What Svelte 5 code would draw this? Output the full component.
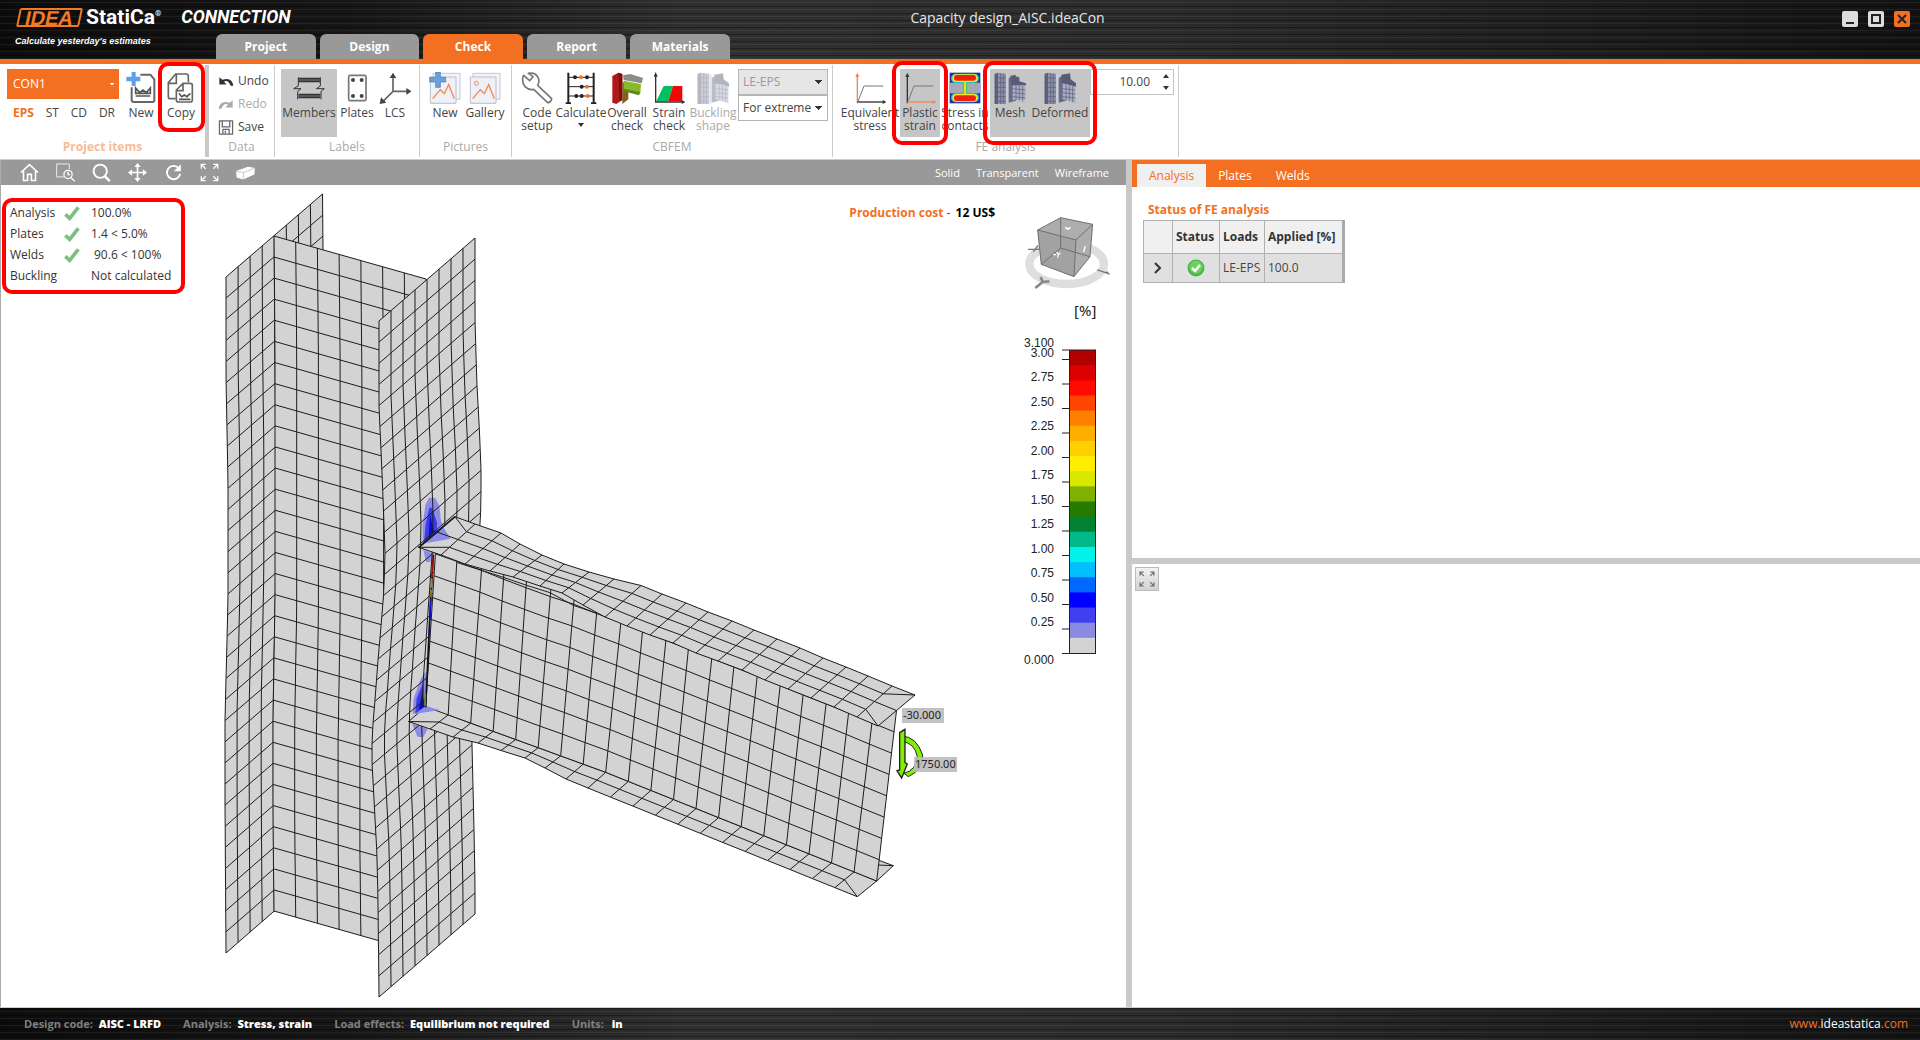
<script>
  const tabs = ['Project', 'Design', 'Check', 'Report', 'Materials'];
  const colors = ['#b00000', '#dc0000', '#ff0a00', '#ff4500', '#ff8000', '#ffae00', '#ffd000', '#ffee00', '#d8e800', '#80b000', '#267a00', '#008232', '#00ba8c', '#00f2e8', '#00bfff', '#0068ff', '#0000ff', '#4040f0', '#8a8ae0', '#d3d3d3'];
  const ticks = Array.from({ length: 12 }, (_, i) => ({ t: (3 - i * 0.25).toFixed(2), y: 359.5 + i * 24.5 }));
  const checks = [
    { name: 'Analysis', ok: true, value: '100.0%' },
    { name: 'Plates', ok: true, value: '1.4 < 5.0%' },
    { name: 'Welds', ok: true, value: '90.6 < 100%', indent: true },
    { name: 'Buckling', ok: false, value: 'Not calculated' }
  ];

  // Point at height y on a polyline of [x, y] nodes.
  const xAt = (line, y) => {
    let i = 1;
    while (i < line.length - 1 && line[i][1] < y) i++;
    const [a, b] = [line[i - 1], line[i]];
    return a[0] + ((b[0] - a[0]) * (y - a[1])) / (b[1] - a[1]);
  };
  const edge = (line, n) => {
    const y0 = line[0][1], y1 = line[line.length - 1][1];
    return Array.from({ length: n + 1 }, (_, i) => {
      const y = y0 + ((y1 - y0) * i) / n;
      return [xAt(line, y), y];
    });
  };
  const mix = (a, b, t) => [a[0] + (b[0] - a[0]) * t, a[1] + (b[1] - a[1]) * t];
  const path = (pts) => 'M' + pts.map((p) => p[0].toFixed(1) + ' ' + p[1].toFixed(1)).join('L');
  // Ruled mesh between two edges that have the same number of stations.
  const mesh = (A, B, cells, from = 0, to = A.length - 1) => {
    let d = '';
    for (let j = from; j <= to; j++) d += path([A[j], B[j]]);
    for (let k = 0; k <= cells; k++) {
      d += path(A.slice(from, to + 1).map((p, i) => mix(p, B[from + i], k / cells)));
    }
    return d;
  };
  const outline = (A, B) => path([...A, ...[...B].reverse()]) + 'Z';

  const rearL = edge([[226, 277], [226, 380], [228, 480], [228, 600], [225, 720], [225, 800], [226, 953]], 32);
  const webL = edge([[274, 236], [275, 350], [275, 600], [273, 720], [273, 820], [274, 911]], 32);
  const rearR = webL.map(([x, y]) => [x + 48.5, y - 42]);
  const webR = webL.map(([x, y]) => [x + 152, y + 43]);
  const frontL = edge([[379, 321], [379, 406], [382, 473], [384, 525], [385, 553], [384, 590], [381, 627], [378, 660], [375, 700], [372, 735], [372, 762], [374, 800], [377, 855], [378, 900], [379, 997]], 32);
  const frontR = edge([[475, 238], [475, 320], [477, 387], [479, 420], [481, 470], [481, 505], [478, 560], [471, 680], [472, 745], [474, 830], [475, 880], [475, 914]], 32);

  const topBack = [[455, 516.7], [475, 524], [501, 533], [520, 544], [542, 555], [564, 564], [589, 572], [614, 579], [641, 585.5], [662, 594], [686, 603], [708, 612], [732, 621], [754, 630], [777, 639], [800, 648], [823, 658], [846, 667], [868, 676], [892, 686], [915, 695]];
  const topFront = [[418.5, 547.3], [441, 555], [465, 564], [490, 571], [513, 577], [540, 586], [562, 593], [583, 605], [605, 617], [627, 626], [650, 635], [673, 643], [696, 653], [718, 661], [742, 670], [765, 680], [788, 689], [811, 698], [834, 707], [857, 717], [878, 726]];
  const webTop = topBack.map((p, i) => mix(p, topFront[i], 0.5));
  const webBottom = topBack.map((_, i) => (i <= 8 ? mix([425.7, 706.7], [605.7, 772.3], i / 8) : mix([605.7, 772.3], [876.7, 881], (i - 8) / 12)));
  const lowFront = topBack.map((_, i) => (i < 8 ? [[408.5, 721.5], [430, 729], [453, 737], [478, 743], [501, 750.5], [525, 758], [545, 768], [566, 779]][i] : mix([588, 788], [857.3, 896.7], (i - 8) / 12)));
  const q = (i, t) => mix(topBack[i], topFront[i], t);
  const low = (i) => mix(webBottom[i], lowFront[i], 0.5);

  const plates = [
    { fill: outline(rearL, rearR), lines: mesh(rearL, rearR, 8) },
    { fill: outline(webL, webR), lines: mesh(webL, webR, 7) }
  ];
  const front = { fill: outline(frontL, frontR), lines: mesh(frontL, frontR, 8) };
  const beam = [
    { fill: 'M878 860L893.3 865.7L876.7 881Z', lines: 'M878 860L893.3 865.7L876.7 881M878 865L893.3 865.7' },
    { fill: outline(webBottom, lowFront), lines: mesh(webBottom, lowFront, 2, 1, 19) + path([low(1), lowFront[0], lowFront[1]]) + path([low(19), lowFront[20], lowFront[19]]) + path([webBottom[0], lowFront[0]]) + path([webBottom[19], webBottom[20], lowFront[20]]) },
    { fill: outline(webTop, webBottom), lines: mesh(webTop, webBottom, 8) }
  ];
  const topPlate = {
    fill: outline(topBack, topFront),
    lines: mesh(topBack, topFront, 4, 1, 19) +
      [[0, 1], [20, 19]].map(([e, s]) => path([q(s, 0), q(e, 0), q(e, 1), q(s, 1)]) + path([q(s, 0.25), q(e, 0)]) + path([q(s, 0.5), q(e, 0.5)]) + path([q(s, 0.75), q(e, 1)])).join('')
  };
</script>

{#snippet plate(p)}
  <path class="skin" d={p.fill} />
  <path class="wire" d={p.lines} />
{/snippet}

{#snippet picture()}
  <path d="M12 4H93V82H12Z" fill="#f2f4f8" stroke="#c3c8d6" stroke-width="3" />
  <path d="M4 15H81V94H4Z" fill="#eff1f6" stroke="#b9bfce" stroke-width="3" />
  <path d="M11 80L34 53L46 65L59 38L76 80" fill="none" stroke="#ef8a58" stroke-width="4" />
{/snippet}

{#snippet steel(bend)}
  <path d="M2 6L12 2L36 5V96H2Z" fill="#8c90a8" />
  <path d="M2 6L12 2V96H2Z" fill="#5d617c" />
  <path d="M36 5L44 8V92L36 96Z" fill="#c9cbd8" />
  <path d="M44 18L60 8L66 10V86L44 92Z" fill="#686c86" />
  <path d={bend ? 'M56 34L94 44V94L56 82Z' : 'M56 36H94V84H56Z'} fill="#a9adc4" />
  <path d={bend ? 'M52 8L78 4L80 22L96 34V44L52 32Z' : 'M50 10L76 16V28L96 34V40H52Z'} fill="#575b76" />
  <path d="M20 4V96M28 5V96M2 18H36M2 32H36M2 46H36M2 60H36M2 74H36M2 88H36M66 38V84M76 40V86M86 42V90M56 50L94 54M56 62L94 66M56 74L94 78" fill="none" stroke="#565a76" stroke-width="2" />
{/snippet}

{#snippet axes(yc, xc)}
  <path d="M10 94V12" stroke={yc} stroke-width="4" /><path d="M10 2L4 15H16Z" fill={yc} />
  <path d="M10 90H90" stroke={xc} stroke-width="4" /><path d="M98 90L86 84V96Z" fill={xc} />
  <path d="M12 88L30 42H88" fill="none" stroke="#777" stroke-width="3" />
{/snippet}

{#snippet corners(c)}
  <path d="M4 18V4H18M4 4L18 18M56 18V4H42M56 4L42 18M4 42V56H18M4 56L18 42M56 42V56H42M56 56L42 42" fill="none" stroke={c} stroke-width="4" />
{/snippet}

<div class="app">
  <header class="metal">
    <div class="top">
      <div class="brand">
        <span class="idea">IDEA</span><span class="statica">StatiCa<sup>®</sup></span><span class="product">CONNECTION</span>
      </div>
      <span class="doc">Capacity design_AISC.ideaCon</span>
      <div class="window">
        <button aria-label="Minimize"><svg viewBox="0 0 16 16"><rect width="16" height="16" rx="2" fill="#ddd" /><path d="M4 12H12" stroke="#222" stroke-width="2" /></svg></button>
        <button aria-label="Maximize"><svg viewBox="0 0 16 16"><rect width="16" height="16" rx="2" fill="#ddd" /><path d="M4 4H12V12H4Z" fill="none" stroke="#222" stroke-width="2" /></svg></button>
        <button aria-label="Close"><svg viewBox="0 0 16 16"><rect width="16" height="16" rx="2" fill="#f36f21" /><path d="M4 4L12 12M12 4L4 12" stroke="#222" stroke-width="2" /></svg></button>
      </div>
    </div>
    <div class="bottom">
      <span class="tag">Calculate yesterday's estimates</span>
      <nav>
        {#each tabs as t}<button class:active={t === 'Check'}>{t}</button>{/each}
      </nav>
    </div>
  </header>

  <section class="ribbon">
    <div class="group g-items">
      <div class="tools">
        <div class="project">
          <select aria-label="Project item"><option>CON1</option></select>
          <div class="kinds"><button class="on">EPS</button><button>ST</button><button>CD</button><button>DR</button></div>
        </div>
        <button class="tool w36">
          <svg viewBox="0 0 96 96"><path d="M46 8H76L88 22V84Q88 90 82 90H26Q20 90 20 84V46" fill="none" stroke="#666" stroke-width="6" stroke-linejoin="round" /><path d="M32 48L44 62L54 54L64 62L76 48V64H32ZM32 72H76" fill="none" stroke="#555" stroke-width="5" /><path d="M20 0H32V14H46V28H32V42H20V28H4V14H20Z" fill="#5f9fe8" /></svg>
          <span>New</span>
        </button>
        <button class="tool w40 marked copy">
          <svg viewBox="0 0 96 96"><path d="M32 80H16Q10 80 10 74V32L32 6H64Q70 6 70 12V30M12 34H34V8" fill="none" stroke="#666" stroke-width="5" /><path d="M54 34H76Q82 34 82 40V84Q82 90 76 90H40Q34 90 34 84V54ZM34 56H54V36" fill="#fff" stroke="#666" stroke-width="5" /><path d="M42 64L50 74L58 69L66 74L76 64M42 82H76" fill="none" stroke="#555" stroke-width="5" /></svg>
          <span>Copy</span>
        </button>
      </div>
      <h2>Project items</h2>
    </div>
    <div class="group g-data">
      <div class="stack">
        <button><svg viewBox="0 0 48 42"><path d="M4 8V30H26L18 22Q30 14 38 34H46Q42 6 13 16Z" fill="#333" /></svg>Undo</button>
        <button class="off"><svg viewBox="0 0 48 42"><path d="M44 8V30H22L30 22Q18 14 10 34H2Q6 6 35 16Z" fill="#aaa" /></svg>Redo</button>
        <button><svg viewBox="0 0 48 48"><path d="M3 3H45V45H3ZM12 3V22H36V3M14 45V30H34V45M22 34V42" fill="none" stroke="#666" stroke-width="4" /></svg>Save</button>
      </div>
      <h2>Data</h2>
    </div>
    <div class="group g-labels">
      <div class="tools">
        <button class="tool w56 pressed">
          <svg viewBox="0 0 96 96"><path d="M16 20H82M16 28H82M16 68H82M16 76H82" stroke="#333" stroke-width="6" /><path d="M16 16V42L2 50L24 50L14 58V82M82 16V42L70 50L94 50L84 58V82" fill="none" stroke="#333" stroke-width="3" /></svg>
          <span>Members</span>
        </button>
        <button class="tool w40">
          <svg viewBox="0 0 96 96"><rect x="23" y="10" width="52" height="76" rx="4" fill="none" stroke="#777" stroke-width="5" /><g fill="#444"><circle cx="36" cy="24" r="6" /><circle cx="62" cy="24" r="6" /><circle cx="36" cy="72" r="6" /><circle cx="62" cy="72" r="6" /></g></svg>
          <span>Plates</span>
        </button>
        <button class="tool w36">
          <svg viewBox="0 0 96 96"><path d="M42 10V58H88M42 58L12 88" fill="none" stroke="#666" stroke-width="5" /><path d="M42 2L32 18H52ZM98 58L82 48V68ZM2 96L6 76L22 92Z" fill="#444" /></svg>
          <span>LCS</span>
        </button>
      </div>
      <h2>Labels</h2>
    </div>
    <div class="group g-pictures">
      <div class="tools">
        <button class="tool w40"><svg viewBox="0 0 96 96">{@render picture()}<path d="M20 0H34V16H50V30H34V46H20V30H2V16H20Z" fill="#6ba0da" stroke="#3f78b8" stroke-width="2" /></svg><span>New</span></button>
        <button class="tool w40"><svg viewBox="0 0 96 96">{@render picture()}<circle cx="22" cy="34" r="6" fill="none" stroke="#ef8a58" stroke-width="3" /></svg><span>Gallery</span></button>
      </div>
      <h2>Pictures</h2>
    </div>
    <div class="group g-cbfem">
      <div class="tools">
        <button class="tool w40"><svg viewBox="0 0 96 96"><path d="M8 10L26 26L36 14L22 4Q44 0 52 18Q56 30 50 40L92 80Q90 92 80 92L38 52Q24 56 12 44Q2 32 6 14Z" fill="none" stroke="#777" stroke-width="5" stroke-linejoin="round" /></svg><span>Code setup</span></button>
        <button class="tool w48"><svg viewBox="0 0 96 96"><path d="M10 2V96M86 2V96M2 94H18M78 94H94" stroke="#222" stroke-width="6" /><path d="M10 16H86M10 44H86M10 72H86" stroke="#222" stroke-width="3" /><g fill="#222"><circle cx="30" cy="16" r="6" /><circle cx="66" cy="16" r="6" /><circle cx="50" cy="44" r="6" /><circle cx="34" cy="72" r="6" /><circle cx="50" cy="72" r="6" /></g><g fill="#f36f21"><circle cx="48" cy="16" r="6" /><circle cx="66" cy="44" r="6" /><circle cx="68" cy="72" r="6" /></g></svg><span>Calculate</span><i class="arrow"></i></button>
        <button class="tool w44"><svg viewBox="0 0 96 96"><path d="M4 12L22 2L34 6V84L16 96L4 92Z" fill="#b01818" /><path d="M22 2L34 6V84L26 88Z" fill="#7d0d0d" /><path d="M34 30L52 36V82L34 96Z" fill="#80601c" /><path d="M36 10L58 6L96 18L92 34L38 24Z" fill="#888e86" /><path d="M38 26L90 36L88 64L38 50Z" fill="#8ab82a" /><path d="M36 50L88 60L84 70L38 58Z" fill="#5f8a12" /></svg><span>Overall check</span></button>
        <button class="tool w40"><svg viewBox="0 0 96 96"><path d="M10 88L32 42H60L46 88Z" fill="#00c060" /><path d="M46 88L60 42H88V88Z" fill="#f00808" /><path d="M8 92V10M6 90H90" stroke="#333" stroke-width="4" /><path d="M8 0L2 14H14ZM98 90L86 84V96Z" fill="#333" /></svg><span>Strain check</span></button>
        <button class="tool w48 off"><svg viewBox="0 0 96 96"><g opacity=".45">{@render steel(true)}</g></svg><span>Buckling shape</span></button>
        <div class="combos">
          <select aria-label="Load effect" disabled><option>LE-EPS</option></select>
          <select aria-label="Extreme"><option>For extreme</option></select>
        </div>
      </div>
      <h2>CBFEM</h2>
    </div>
    <div class="group g-fe">
      <div class="tools">
        <button class="tool w60 clip"><svg viewBox="0 0 96 96">{@render axes('#f08850', '#333')}</svg><span>Equivalent stress</span></button>
        <button class="tool w40 pressed marked"><svg viewBox="0 0 96 96">{@render axes('#333', '#f08850')}</svg><span>Plastic strain</span></button>
        <button class="tool w50 clip"><svg viewBox="0 0 96 96"><rect x="2" y="2" width="92" height="92" fill="#2a2a9c" /><rect x="2" y="32" width="92" height="32" fill="#a5a8b8" /><rect x="6" y="5" width="84" height="28" rx="14" fill="#10c8c0" /><rect x="6" y="63" width="84" height="28" rx="14" fill="#10c8c0" /><path d="M32 26H64L54 38V60L64 72H32L42 60V38Z" fill="#40d060" /><rect x="10" y="7" width="76" height="23" rx="12" fill="#f8e820" /><rect x="10" y="66" width="76" height="23" rx="12" fill="#f8e820" /><rect x="15" y="9" width="66" height="17" rx="8" fill="#f02010" /><rect x="15" y="70" width="66" height="17" rx="8" fill="#f02010" /><path d="M48 28V68" stroke="#f8e820" stroke-width="5" /></svg><span>Stress in contacts</span></button>
        <div class="pair marked pressed">
          <button class="tool w40"><svg viewBox="0 0 96 96">{@render steel(false)}</svg><span>Mesh</span></button>
          <button class="tool w60"><svg viewBox="0 0 96 96">{@render steel(true)}</svg><span>Deformed</span></button>
        </div>
        <div class="spin">
          <input aria-label="Deformation scale" value="10.00" />
          <div class="steps"><button aria-label="Increase"><i class="arrow up"></i></button><button aria-label="Decrease"><i class="arrow"></i></button></div>
        </div>
      </div>
      <h2>FE analysis</h2>
    </div>
  </section>

  <main>
    <section class="view">
      <div class="viewbar">
        <button aria-label="Home"><svg viewBox="0 0 60 60"><path d="M3 30L30 5L57 30M11 25V55H24V36H36V55H49V25" fill="none" stroke="#fff" stroke-width="5" /></svg></button>
        <button aria-label="Zoom window"><svg viewBox="0 0 60 60"><path d="M26 44H2V3H42V20" fill="none" stroke="#eee" stroke-width="3" /><circle cx="38" cy="36" r="13" fill="none" stroke="#fff" stroke-width="4" /><path d="M47 46L59 58M38 28V37H44" fill="none" stroke="#fff" stroke-width="4" /></svg></button>
        <button aria-label="Zoom"><svg viewBox="0 0 60 60"><circle cx="26" cy="26" r="21" fill="none" stroke="#fff" stroke-width="6" /><path d="M41 42L56 57" stroke="#fff" stroke-width="8" /></svg></button>
        <button aria-label="Pan"><svg viewBox="0 0 60 60"><path d="M30 8V52M8 30H52" stroke="#fff" stroke-width="5" /><path d="M30 0L20 13H40ZM30 60L20 47H40ZM0 30L13 20V40ZM60 30L47 20V40Z" fill="#fff" /></svg></button>
        <button aria-label="Rotate"><svg viewBox="0 0 60 60"><path d="M45 15A21 21 0 1 0 51 34" fill="none" stroke="#fff" stroke-width="6" /><path d="M53 4V26H31Z" fill="#fff" /></svg></button>
        <button aria-label="Fit"><svg viewBox="0 0 60 60">{@render corners('#fff')}</svg></button>
        <button aria-label="Solid view"><svg viewBox="0 0 60 60"><path d="M0 25L38 12L60 16L58 36L22 52L2 46Z" fill="#fff" /><path d="M0 26L24 30L60 16M24 30L22 52" fill="none" stroke="#aaa" stroke-width="2" /></svg></button>
        <div class="modes"><button>Solid</button><button>Transparent</button><button>Wireframe</button></div>
      </div>
      <div class="canvas">
        <svg class="scene" viewBox="1 185 1125 820" preserveAspectRatio="xMinYMin meet">
          {#each plates as p}{@render plate(p)}{/each}
          <path class="skin" d={front.fill} />
          <g transform="translate(360 460) scale(.3333)">
            <path d="M188 255L188 195L196 135L207 113L226 114L238 138L243 182L270 236ZM190 270L218 280L210 307L198 305ZM158 762L161 715L183 655L199 633L200 755ZM157 792L203 806L190 832L172 830Z" fill="#8c8ce6" />
            <path d="M192 250L197 195L208 143H216L232 190L228 220ZM166 760L170 715L190 668L196 750Z" fill="#3b3bea" />
            <path d="M206 235L210 165L222 215ZM176 750L186 700L195 740Z" fill="#0a0ad0" />
          </g>
          <path class="wire" d={front.lines} />
          {#each beam as p}{@render plate(p)}{/each}
          <path class="skin" d={topPlate.fill} />
          <g transform="translate(360 460) scale(.3333)">
            <path d="M246 195L272 236L195 250ZM197 738L238 750L165 762Z" fill="#8c8ce6" />
            <path d="M236 205L228 222L195 245Z" fill="#3b3bea" />
            <g fill="none" stroke-width="5">
              <path d="M220 284L209 480L197 742M176 263L285 170" stroke="#111" />
              <path d="M219 290L217 350" stroke="#a01010" stroke-width="4" /><path d="M215 355L213 412" stroke="#c08010" stroke-width="4" stroke-dasharray="28 6" /><path d="M212 418L210 480M208 508L207 528" stroke="#1010c0" /><path d="M196 700L195 738" stroke="#6a9010" />
            </g>
            <path d="M292 308L430 352L500 376L570 398L640 436L710 460" fill="none" stroke="#222" stroke-width="3" />
          </g>
          <path class="wire" d={topPlate.lines} />

          <g transform="translate(600 540) scale(.3333)">
            <path d="M906 588Q950 590 968 645Q970 690 925 710L912 700Q950 690 952 650Q945 610 906 604Z" fill="#80f000" stroke="#222" stroke-width="3" />
            <path d="M899 578L915 568V668L922 672L905 714L891 692L899 690Z" fill="#80f000" stroke="#222" stroke-width="4" />
          </g>
          <g class="tagbox">
            <rect x="902" y="708" width="42" height="15" /><rect x="914" y="757" width="43" height="15" />
            <text x="903" y="719">-30.000</text><text x="915" y="768">1750.00</text>
          </g>

          <g transform="translate(820 160) scale(.3333)">
            <ellipse cx="740" cy="312" rx="112" ry="60" fill="none" stroke="#dedede" stroke-width="25" />
            <path d="M722 173L818 193L810 290L762 350L664 313L653 210Z" fill="#adadad" />
            <path d="M653 210L768 240L762 350L664 313Z" fill="#a2a2a2" />
            <path d="M722 173L818 193L810 290L762 350L664 313L653 210ZM653 210L768 240L818 193M768 240L762 350M722 173V264L664 313M722 264L810 290" fill="none" stroke="#6f6f6f" stroke-width="3" />
            <path d="M624 268H660M640 276L654 256M832 330L868 342M860 334L868 344" fill="none" stroke="#777" stroke-width="4" />
            <path d="M646 384L668 366L688 364M668 366L662 351" fill="none" stroke="#888" stroke-width="8" />
            <path d="M735 202L748 208M740 208L752 202M796 258L791 276M700 284L708 284M710 276L715 284L721 278M715 284L713 293" fill="none" stroke="#fff" stroke-width="4" />
          </g>

          <text class="unit" x="1074" y="316">[%]</text>
          {#each colors as c, i}<rect x="1069" y={350 + i * 15.15} width="27" height="16" fill={c} />{/each}
          <rect x="1069.5" y="350" width="26" height="303.5" fill="none" stroke="#222" />
          <path d="M1062 350H1069M1062 653.5H1069" stroke="#222" />
          <g class="scale">
            <text x="1054" y="347">3.100</text>
            {#each ticks as k}<path d="M1062 {k.y}H1069" stroke="#222" /><text x="1054" y={k.y - 3}>{k.t}</text>{/each}
            <text x="1054" y="664">0.000</text>
          </g>
        </svg>
        <p class="cost"><b>Production cost</b> - <strong>12 US$</strong></p>
        <dl class="summary">
          {#each checks as c}
            <dt>{c.name}</dt>
            <dd class="tick">{#if c.ok}<svg viewBox="0 0 48 48"><path d="M4 28L17 40L43 7" fill="none" stroke="#7cc07e" stroke-width="11" /></svg>{/if}</dd>
            <dd class:indent={c.indent}>{c.value}</dd>
          {/each}
        </dl>
      </div>
    </section>
    <div class="split"></div>
    <aside>
      <div class="results">
        <div class="subtabs"><button class="active">Analysis</button><button>Plates</button><button>Welds</button></div>
        <h3>Status of FE analysis</h3>
        <table>
          <thead><tr><th class="c1" aria-label="Expand"></th><th class="c2">Status</th><th class="c3">Loads</th><th class="c4">Applied [%]</th></tr></thead>
          <tbody><tr>
            <td class="mid"><button aria-label="Expand row"><svg class="chev" viewBox="0 0 10 12"><path d="M2 1L7 6L2 11" fill="none" stroke="#333" stroke-width="2" /></svg></button></td>
            <td class="mid"><svg class="ok" viewBox="0 0 18 18"><circle cx="9" cy="9" r="8.5" fill="#4cb848" /><circle cx="9" cy="8" r="6.5" fill="#6fd060" /><path d="M5 9L8 12L13 6" fill="none" stroke="#fff" stroke-width="2.5" /></svg></td>
            <td>LE-EPS</td><td>100.0</td>
          </tr></tbody>
        </table>
      </div>
      <div class="detail">
        <button aria-label="Fit view"><svg viewBox="0 0 60 60">{@render corners('#666')}</svg></button>
      </div>
    </aside>
  </main>

  <footer class="metal">
    <span>Design code: <b>AISC - LRFD</b></span>
    <span>Analysis: <b>Stress, strain</b></span>
    <span>Load effects: <b>Equilibrium not required</b></span>
    <span>Units: <b class="unitval">in</b></span>
    <a href="#home"><em>www.</em>ideastatica<em>.com</em></a>
  </footer>
</div>

<style>
  :global(body) { margin: 0; background: #fff; }
  .app { display: flex; flex-direction: column; min-height: 100vh; font: 12px/16px "Open Sans", "Noto Sans", sans-serif; color: #444; }
  .app, .app * { box-sizing: border-box; }
  button { font: inherit; color: inherit; background: none; border: 0; padding: 0; margin: 0; }
  svg { display: block; }
  h2, h3, p, dl, dd { margin: 0; font-size: 12px; }

  .metal {
    background:
      repeating-linear-gradient(0deg, rgba(255, 255, 255, .06) 0 1px, transparent 1px 3px, rgba(0, 0, 0, .35) 3px 4px, transparent 4px 7px),
      linear-gradient(90deg, #0c0c0c, #161616 18%, #303030 36%, #2c2c2c 60%, #1c1c1c 85%, #121212);
    color: #fff;
  }
  header { border-bottom: 5px solid #f36f21; }
  .top { display: flex; height: 34px; align-items: center; }
  .brand { display: flex; align-items: center; flex: 0 0 47%; padding-left: 18px; }
  .idea { width: 63px; height: 19px; border: 2px solid #f37a21; transform: skewX(-12deg); color: #f37a21; font: bold 20px/16px "Liberation Sans", sans-serif; text-align: center; border-radius: 2px; }
  .statica { margin-left: 5px; font: bold 21px/24px Roboto, "Liberation Sans", sans-serif; }
  .statica sup { font-size: 8px; line-height: 8px; vertical-align: 8px; }
  .product { margin-left: 20px; font: italic bold 18px/24px Roboto, "Liberation Sans", sans-serif; }
  .doc { color: #e6e6e6; font-size: 14px; padding-left: 8px; padding-top: 2px; }
  .window { display: flex; gap: 10px; margin-left: auto; padding: 3px 10px 0 0; }
  .window svg { width: 16px; height: 16px; }
  .bottom { display: flex; height: 25px; }
  .tag { width: 216px; padding-left: 15px; font: italic bold 9px/14px "Liberation Sans", sans-serif; }
  nav { display: flex; gap: 4px; width: 514px; }
  nav button { flex: 1; background: #999; color: #fff; font-weight: bold; border-radius: 6px 6px 0 0; }
  nav button.active { background: #f36f21; }

  .ribbon { display: flex; height: 96px; border-bottom: 1px solid #ccc; background: #fff; }
  .group { display: flex; flex-direction: column; justify-content: space-between; margin: 1px 0 2px; padding: 4px 0 1px; border-right: 1px solid #ccc; }
  .group h2 { text-align: center; font-weight: normal; color: #aaa; line-height: 18px; }
  .g-items { width: 209px; border-right: 4px solid #c9c9c9; }
  .group.g-items h2 { font-weight: bold; color: #f9bb96; }
  .g-data { width: 66px; }
  .g-labels { width: 145px; }
  .g-pictures { width: 92px; }
  .g-cbfem { width: 321px; }
  .g-fe { width: 346px; }
  .tools { display: flex; height: 68px; }
  .tool { position: relative; display: flex; flex-direction: column; align-items: center; flex: none; height: 68px; padding-top: 3px; line-height: 13px; text-align: center; white-space: normal; }
  .tool svg { width: 32px; height: 32px; flex: none; margin-bottom: 2px; }
  .w36 { width: 36px; } .w40 { width: 40px; } .w44 { width: 44px; } .w48 { width: 48px; } .w50 { width: 50px; } .w56 { width: 56px; } .w60 { width: 60px; }
  .clip { overflow: hidden; }
  .clip span { width: 64px; }
  .pressed { background: #c6c6c6; }
  .off { color: #aaa; }
  .marked { position: relative; }
  .marked::after { content: ""; position: absolute; inset: -8px; border: 4px solid #f00; border-radius: 10px; z-index: 2; pointer-events: none; }
  .copy { margin-left: 2px; }
  .copy::after { inset: -7px -4px 5px -3px; }
  .arrow { border: 3px solid transparent; border-top: 4px solid #333; border-bottom: 0; margin-top: 4px; }
  .arrow.up { border-top: 0; border-bottom: 4px solid #333; }
  .project { width: 112px; margin: 0 4px 0 7px; flex: none; }
  select { appearance: none; font: inherit; border-radius: 0; margin: 0; }
  .project select { width: 100%; height: 30px; padding: 0 6px; color: #fff; border: 0; background: #f36f21; background-image: linear-gradient(45deg, transparent 50%, #fff 50%), linear-gradient(-45deg, transparent 50%, #fff 50%); background-size: 2px 2px; background-position: right 7px center, right 5px center; background-repeat: no-repeat; }
  .kinds { display: flex; justify-content: space-between; padding: 6px 4px 0 6px; }
  .kinds .on { color: #f36f21; font-weight: bold; }
  .stack { display: flex; flex-direction: column; gap: 7px; padding: 4px 0 0 9px; }
  .stack button { display: flex; align-items: center; gap: 4px; }
  .stack svg { width: 16px; height: 15px; }
  .g-labels .tools { padding-left: 6px; }
  .g-pictures .tools { padding-left: 5px; }
  .g-cbfem .tools { padding-left: 5px; }
  .g-fe .tools { padding-left: 7px; }
  .combos { display: flex; flex-direction: column; flex: none; width: 90px; margin-left: 1px; }
  .combos select { height: 26px; padding: 0 4px; border: 1px solid #b5b5b5; color: #444; background: #fff conic-gradient(from -36deg at 50% 100%, #333 72deg, transparent 72deg) no-repeat right 5px center; background-size: 7px 5px; }
  .combos select { background-image: linear-gradient(45deg, transparent 50%, #333 50%), linear-gradient(-45deg, transparent 50%, #333 50%); background-size: 4px 4px; background-position: right 8px center, right 4px center; transform: none; }
  .combos select { background-image: linear-gradient(225deg, transparent 0 0), conic-gradient(from 144deg at 50% 0, transparent 0 0); }
  .combos select { background-image: conic-gradient(from -45deg at 50% 100%, #333 90deg, transparent 90deg); background-size: 7px 4px; background-position: right 5px center; }
  .combos select:disabled { background-color: #e6e6e6; color: #999; opacity: 1; }
  .pair { display: flex; z-index: 1; flex: none; height: 68px; width: 100px; }
  .pair::after { inset: -8px -7px; }
  .spin { display: flex; flex: 1; height: 26px; margin: 0 4px 0 0; border: 1px solid #c4c4c4; }
  .spin input { width: 60px; flex: 1; min-width: 0; border: 0; padding: 0 8px 0 0; text-align: right; font: inherit; color: #444; background: none; }
  .steps { display: flex; flex-direction: column; justify-content: space-around; width: 15px; }
  .steps .arrow { display: block; width: 0; margin: 0 auto; }

  main { flex: 1; display: grid; grid-template-columns: 1126fr 6px 788fr; min-height: 0; }
  .view { display: flex; flex-direction: column; border-left: 1px solid #aaa; min-width: 0; }
  .viewbar { display: flex; gap: 17px; align-items: center; height: 25px; padding: 0 17px 0 19px; background: #999; color: #fff; }
  .viewbar svg { width: 19px; height: 19px; }
  .modes { display: flex; gap: 16px; margin-left: auto; font-size: 11px; }
  .canvas { position: relative; flex: 1; }
  .scene { width: 100%; height: auto; }
  .skin { fill: #d3d3d3; }
  .wire { fill: none; stroke: #1c1c1c; stroke-width: 1; stroke-linejoin: round; }
  .tagbox rect { fill: #bbb; fill-opacity: .9; }
  .tagbox text { font: 11px "Noto Sans", sans-serif; fill: #222; }
  .unit { font: 15px "Noto Sans", sans-serif; fill: #222; }
  .scale text { font: 12px "Liberation Sans", sans-serif; fill: #222; text-anchor: end; }
  .cost { position: absolute; right: 131px; top: 20px; }
  .cost b { color: #f36f21; } .cost strong { color: #000; margin-left: 2px; }
  .summary { position: absolute; left: 1px; top: 13px; width: 183px; padding: 0 4px 4px; border: 4px solid #f00; border-radius: 10px; display: grid; grid-template-columns: 54px 27px 1fr; grid-auto-rows: 21px; align-items: center; color: #333; }
  .summary svg { width: 16px; height: 16px; }
  .indent { padding-left: 3px; }
  .split { background: #c9c9c9; }
  aside { display: flex; flex-direction: column; min-width: 0; }
  .results { flex: 400; }
  .detail { flex: 439; border-top: 6px solid #c9c9c9; padding: 3px; }
  .detail button { width: 24px; height: 24px; padding: 3px; border: 1px solid #bbb; background: linear-gradient(#f2f2f2, #d2d2d2); }
  .detail svg { width: 16px; height: 16px; }
  .subtabs { display: flex; height: 27px; padding: 4px 0 0 5px; background: #f36f21; color: #fff; }
  .subtabs button { padding: 0 12px; }
  .subtabs .active { background: #f0f0f0; color: #f36f21; }
  h3 { color: #f36f21; padding: 15px 0 2px 16px; line-height: 16px; }
  table { margin-left: 11px; border-collapse: collapse; border: 1px solid #aaa; border-right-width: 3px; }
  th, td { border: 1px solid #b0b0b0; padding: 0 3px; text-align: left; white-space: nowrap; }
  th { height: 33px; background: #f0f0f0; color: #333; }
  td { height: 29px; background: #e0e0e0; }
  .c1 { width: 29px; } .c2 { width: 47px; } .c3 { width: 45px; } .c4 { width: 79px; }
  .mid svg { margin: 0 auto; }
  .mid button { display: block; width: 100%; }
  .chev { width: 10px; height: 12px; } .ok { width: 18px; height: 18px; }

  footer.metal { display: flex; align-items: center; gap: 22px; height: 33px; padding: 0 12px 0 24px; border-top: 1px solid #ccc; color: #808080; font-weight: bold; font-size: 11px; }
  footer b { color: #fff; margin-left: 3px; }
  footer .unitval { margin-left: 5px; }
  footer a { margin-left: auto; color: #fff; text-decoration: none; font-weight: normal; font-size: 12px; }
  footer em { color: #f36f21; font-style: normal; }
</style>
